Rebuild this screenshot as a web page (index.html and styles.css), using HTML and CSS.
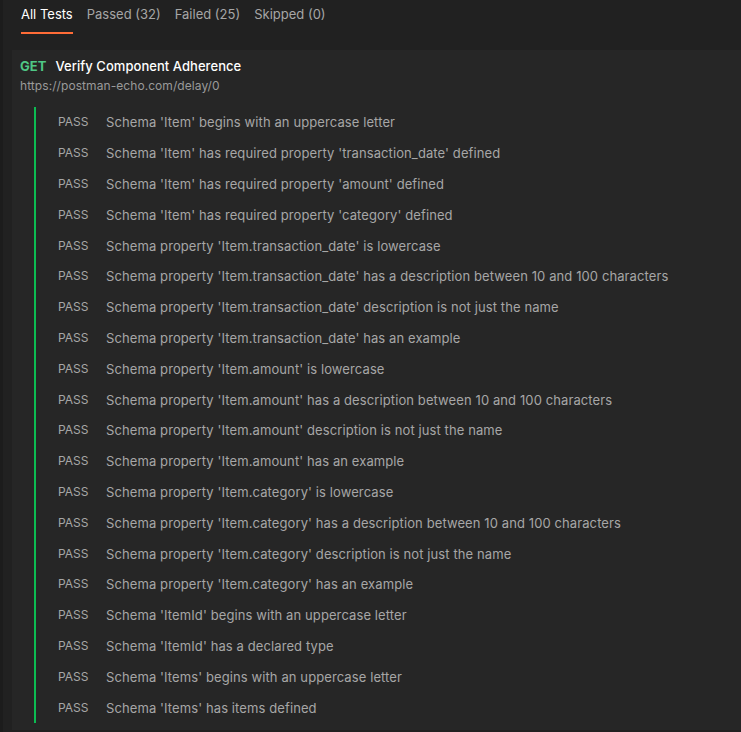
FILE: index.html
```html
<!DOCTYPE html>
<html>
<head>
<meta charset="utf-8">
<link rel="stylesheet" href="styles.css">
</head>
<body>
<div class="page">
  <div class="tabs">
    <div class="tab active">All Tests</div>
    <div class="tab">Passed (32)</div>
    <div class="tab">Failed (25)</div>
    <div class="tab">Skipped (0)</div>
  </div>
  <div class="card">
    <div class="req">
      <div class="title"><span class="method">GET</span><span class="name">Verify Component Adherence</span></div>
      <div class="url">https://postman-echo.com/delay/0</div>
    </div>
    <div class="results">
      <div class="row"><span class="status">PASS</span><span class="desc">Schema 'Item' begins with an uppercase letter</span></div>
      <div class="row"><span class="status">PASS</span><span class="desc">Schema 'Item' has required property 'transaction_date' defined</span></div>
      <div class="row"><span class="status">PASS</span><span class="desc">Schema 'Item' has required property 'amount' defined</span></div>
      <div class="row"><span class="status">PASS</span><span class="desc">Schema 'Item' has required property 'category' defined</span></div>
      <div class="row"><span class="status">PASS</span><span class="desc">Schema property 'Item.transaction_date' is lowercase</span></div>
      <div class="row"><span class="status">PASS</span><span class="desc">Schema property 'Item.transaction_date' has a description between 10 and 100 characters</span></div>
      <div class="row"><span class="status">PASS</span><span class="desc">Schema property 'Item.transaction_date' description is not just the name</span></div>
      <div class="row"><span class="status">PASS</span><span class="desc">Schema property 'Item.transaction_date' has an example</span></div>
      <div class="row"><span class="status">PASS</span><span class="desc">Schema property 'Item.amount' is lowercase</span></div>
      <div class="row"><span class="status">PASS</span><span class="desc">Schema property 'Item.amount' has a description between 10 and 100 characters</span></div>
      <div class="row"><span class="status">PASS</span><span class="desc">Schema property 'Item.amount' description is not just the name</span></div>
      <div class="row"><span class="status">PASS</span><span class="desc">Schema property 'Item.amount' has an example</span></div>
      <div class="row"><span class="status">PASS</span><span class="desc">Schema property 'Item.category' is lowercase</span></div>
      <div class="row"><span class="status">PASS</span><span class="desc">Schema property 'Item.category' has a description between 10 and 100 characters</span></div>
      <div class="row"><span class="status">PASS</span><span class="desc">Schema property 'Item.category' description is not just the name</span></div>
      <div class="row"><span class="status">PASS</span><span class="desc">Schema property 'Item.category' has an example</span></div>
      <div class="row"><span class="status">PASS</span><span class="desc">Schema 'ItemId' begins with an uppercase letter</span></div>
      <div class="row"><span class="status">PASS</span><span class="desc">Schema 'ItemId' has a declared type</span></div>
      <div class="row"><span class="status">PASS</span><span class="desc">Schema 'Items' begins with an uppercase letter</span></div>
      <div class="row"><span class="status">PASS</span><span class="desc">Schema 'Items' has items defined</span></div>
    </div>
  </div>
</div>
</body>
</html>
```
FILE: styles.css
```css
html, body {
  margin: 0;
  padding: 0;
  background: #212121;
  height: 100%;
  overflow: hidden;
}
body {
  font-family: Inter, "Noto Sans", sans-serif;
  font-size: 13px;
  color: #a6a6a6;
}
.page {
  border-left: 3px solid #1c1c1c;
  height: 100%;
  box-sizing: border-box;
  padding-left: 9px;
}
.tabs {
  display: flex;
  gap: 14px;
  padding-left: 9px;
  height: 34px;
  align-items: stretch;
}
.tab {
  padding-top: 6px;
  line-height: 17px;
  color: #a6a6a6;
  border-bottom: 2px solid transparent;
  box-sizing: border-box;
  height: 34px;
}
.tab.active {
  color: #ffffff;
  border-bottom-color: #ff6c37;
}
.card {
  margin-top: 16px;
  background: #262626;
  padding: 7px 0 0 0;
  height: 680px;
  box-sizing: border-box;
}
.req {
  padding-left: 8px;
}
.title {
  line-height: 18px;
  font-weight: 500;
  color: #ffffff;
  letter-spacing: 0.05px;
}
.method {
  color: #4fc785;
  font-weight: 700;
  margin-right: 9px;
}
.url {
  font-size: 12px;
  color: #9a9a9a;
  line-height: 16px;
  margin-top: 3px;
  letter-spacing: 0.07px;
}
.results {
  margin-top: 13px;
  margin-left: 22px;
  border-left: 2px solid #0cbb52;
  padding: 0 0 0 22px;
}
.row {
  display: flex;
  height: 30.8px;
  align-items: center;
  line-height: 16px;
}
.status {
  width: 48px;
  font-size: 12px;
  color: #a6a6a6;
}
.desc {
  color: #a6a6a6;
  letter-spacing: 0.1px;
}
```
